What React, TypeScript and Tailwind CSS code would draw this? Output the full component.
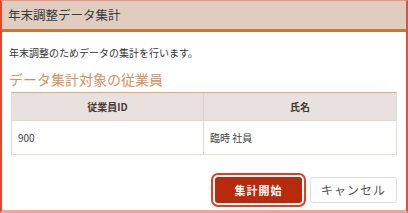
import React from "react";

export default function App() {
  return (
    <div
      className="w-[408px] h-[213px] box-border bg-white border-l-2 border-l-[#e8462c] border-r-2 border-r-[#e5503a] border-t border-t-[#f09080] border-b-[3px] border-b-[#f2a496] flex flex-col overflow-hidden"
      style={{ fontFamily: '"Noto Sans CJK JP", "Noto Sans", sans-serif' }}
    >
      <div className="h-[31px] shrink-0 bg-[#dfcdbf] border-b-[3px] border-b-[#c27a3c] flex items-center pl-[6px] text-[12.5px] text-[#3a3a3a]">
        年末調整データ集計
      </div>
      <div className="flex flex-col pl-[7px] pr-[9px]">
        <div className="mt-[13px] text-[10px] leading-[16px] text-[#333]">
          年末調整のためデータの集計を行います。
        </div>
        <div className="mt-[9px] text-[14px] leading-[18px] text-[#d4905e]">
          データ集計対象の従業員
        </div>
        <div className="mt-[4px] ml-[2px] border border-[#eadbd0] border-t-[#d8a880]">
          <div className="grid grid-cols-2 h-[28px] bg-[#e9e1df] border-b border-b-[#e6d4c8] text-[10px] font-bold text-[#4a3a30]">
            <div className="flex items-center justify-center border-r border-r-[#e6d4c8]">従業員ID</div>
            <div className="flex items-center justify-center">氏名</div>
          </div>
          <div className="grid grid-cols-2 h-[33px] text-[10px] text-[#444]">
            <div className="flex items-center pl-[6px] border-r border-r-[#e6d4c8]">900</div>
            <div className="flex items-center pl-[6px]">臨時 社員</div>
          </div>
        </div>
        <div className="mt-[22px] flex justify-end gap-[8px]">
          <button className="w-[87px] h-[26px] bg-[#b82a0c] text-white text-[11px] font-bold rounded-[3px] tracking-[1px] outline-2 outline-offset-2 outline-[#e0402a]">
            集計開始
          </button>
          <button className="w-[87px] h-[26px] bg-white border border-[#dcdcdc] text-[#555] text-[12px] rounded-[3px] tracking-[1px]">
            キャンセル
          </button>
        </div>
      </div>
    </div>
  );
}
